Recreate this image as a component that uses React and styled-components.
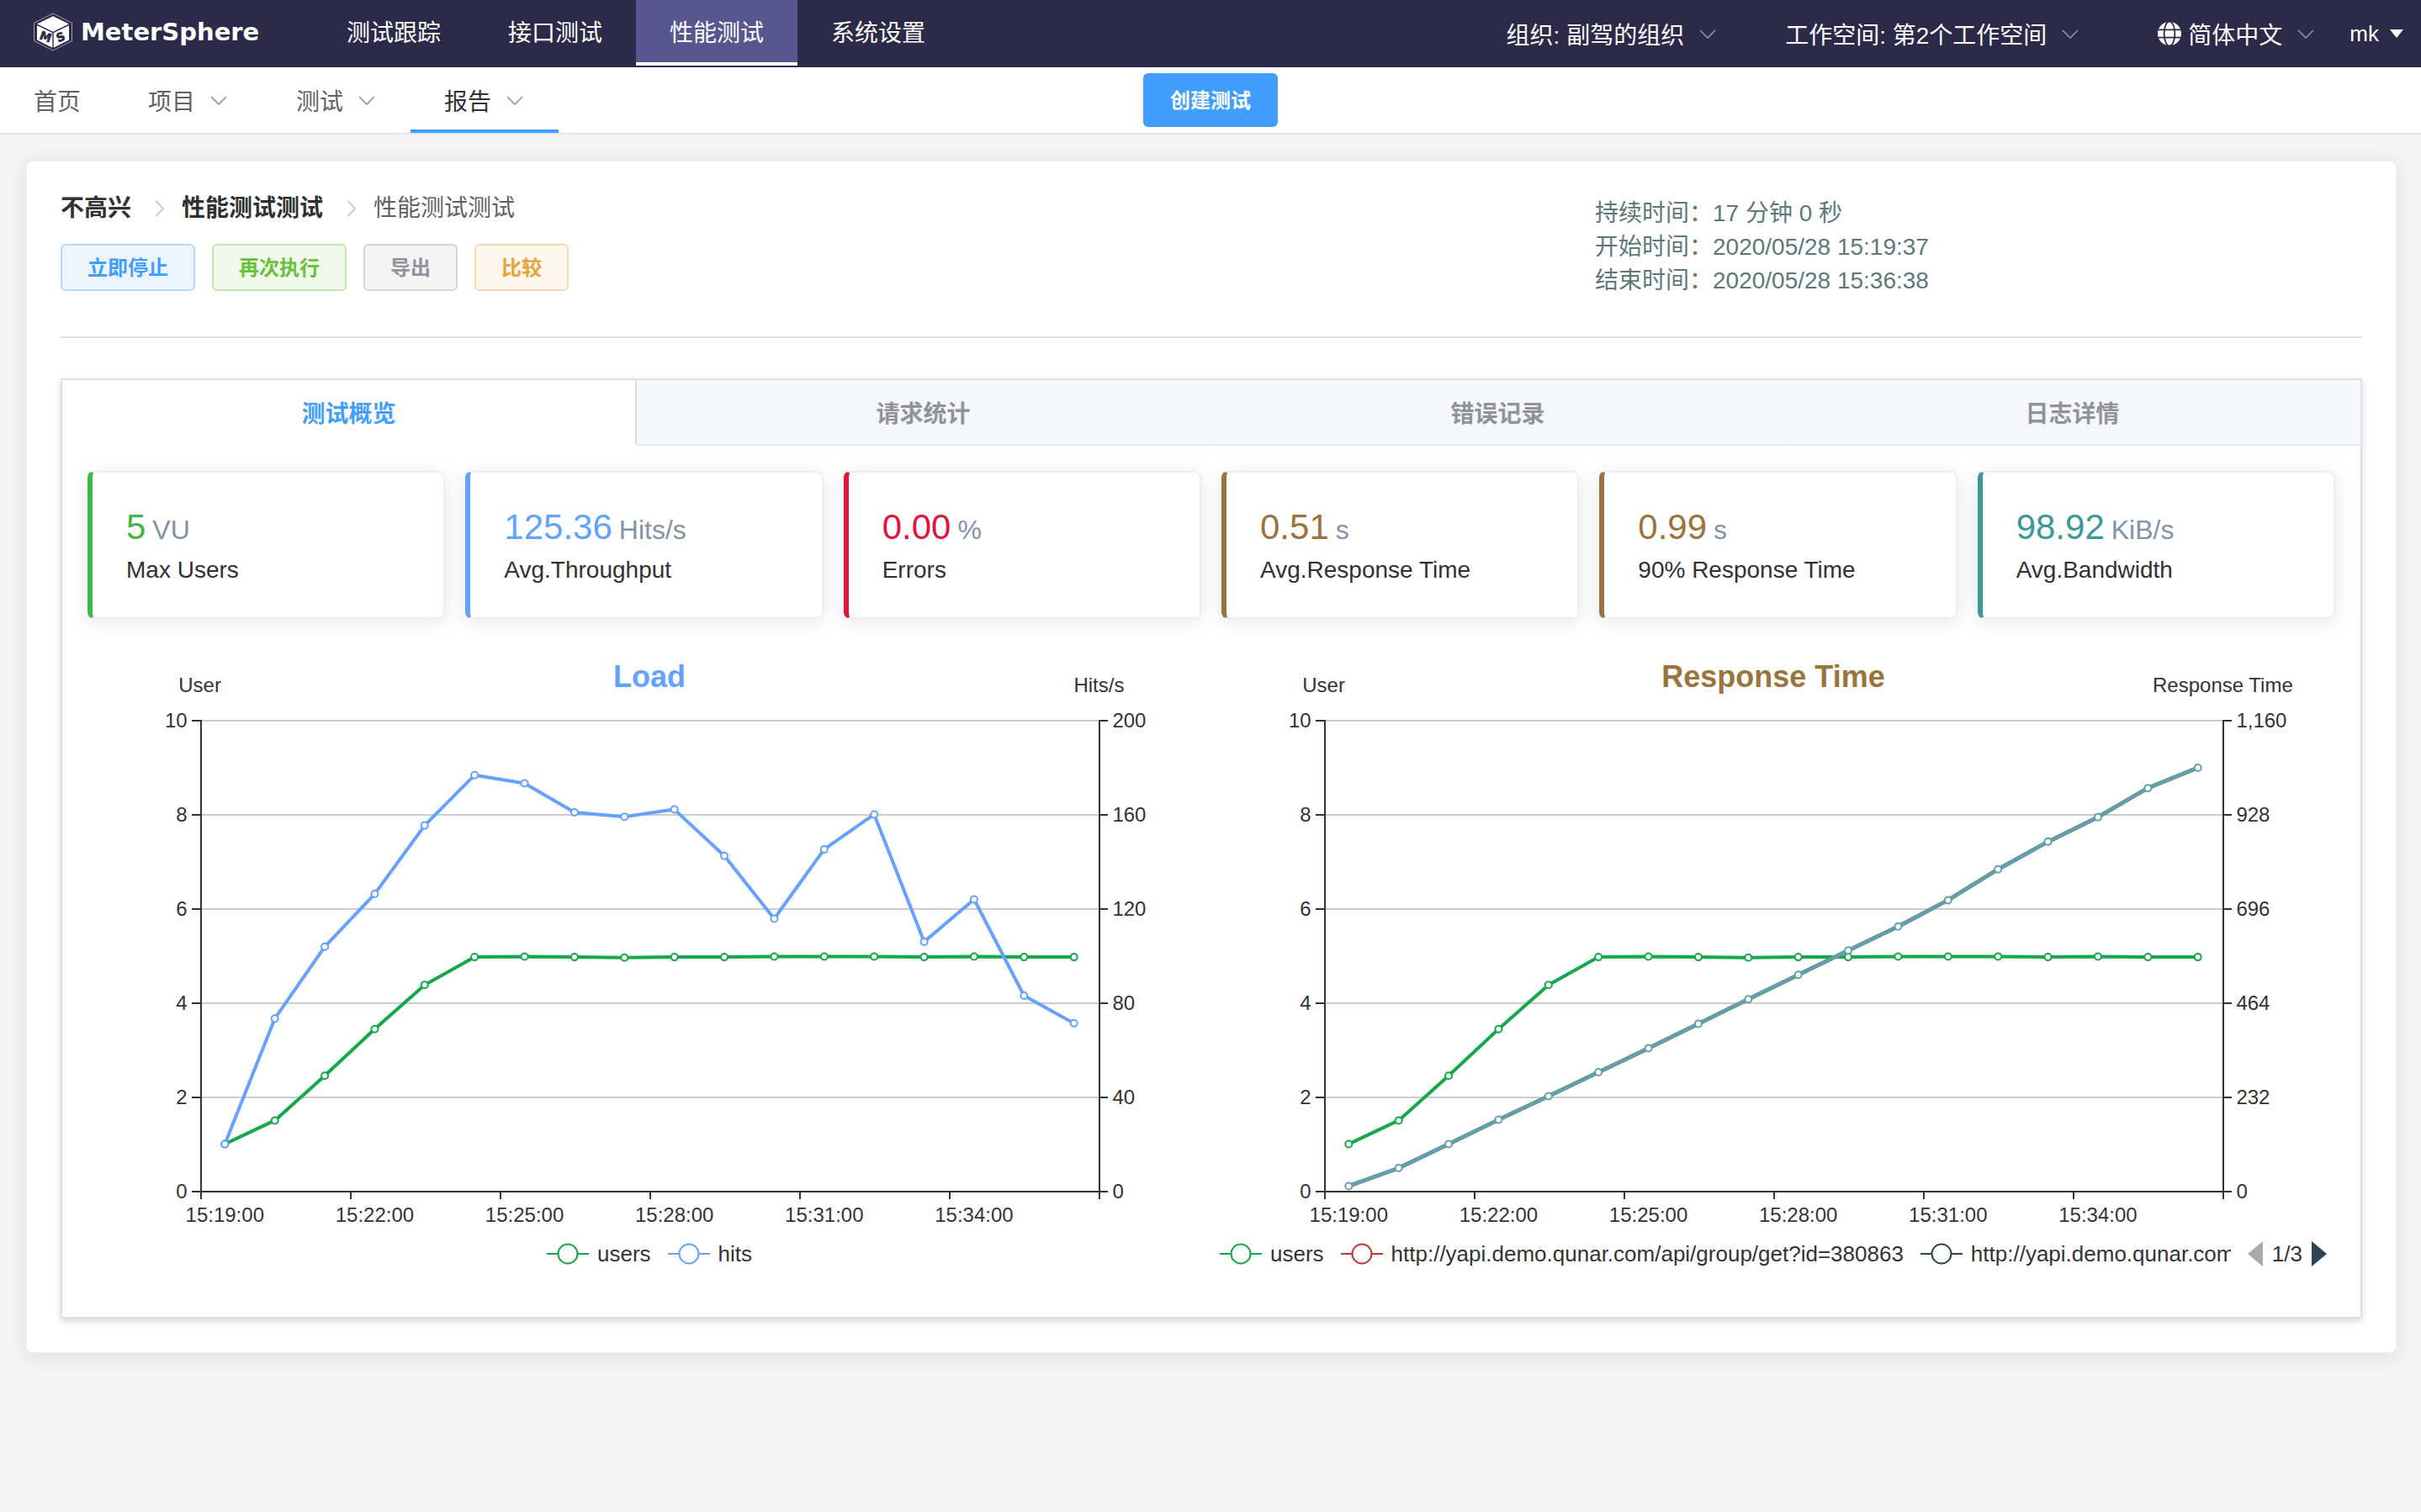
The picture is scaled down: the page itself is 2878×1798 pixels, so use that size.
import React from "react";
import styled, { createGlobalStyle } from "styled-components";

const GlobalStyle = createGlobalStyle`
  *, *::before, *::after { box-sizing: border-box; }
  body {
    margin: 0;
    background: #f5f5f5;
    color: #303133;
    font-family: "Liberation Sans", "Noto Sans CJK SC", sans-serif;
    font-size: 28px;
  }
  button { font-family: inherit; cursor: pointer; }
  a { color: inherit; text-decoration: none; }
`;

/* ---------- top bar ---------- */

const TopBar = styled.header`
  display: flex;
  height: 80px;
  padding-right: 20px;
  background: #2c2a48;
  color: #fff;
`;

const Brand = styled.a`
  display: flex;
  align-items: center;
  gap: 10px;
  flex: none;
  width: 372px;
  padding: 0 0 4px 40px;
`;

const BrandName = styled.span`
  font-family: "DejaVu Sans", sans-serif;
  font-weight: 700;
  font-size: 29px;
  line-height: 40px;
`;

const MainNav = styled.nav`
  display: flex;
  height: 78px;
`;

const MainLink = styled.a`
  display: flex;
  align-items: center;
  padding: 0 40px;
  white-space: nowrap;
  border-bottom: 4px solid ${(p) => (p.$active ? "#fff" : "transparent")};
  background: ${(p) => (p.$active ? "#595591" : "transparent")};
  background-clip: padding-box;
`;

const TopMenus = styled.div`
  display: flex;
  margin-left: auto;
`;

const MenuButton = styled.button`
  display: flex;
  align-items: center;
  gap: ${(p) => (p.$small ? 12 : 16)}px;
  padding: ${(p) => p.$pad || "0 40px"};
  border: 0;
  background: none;
  color: #fff;
  font-size: ${(p) => (p.$small ? 26 : 28)}px;
  white-space: nowrap;
`;

const Language = styled.span`
  display: flex;
  align-items: center;
  gap: 8px;
`;

/* ---------- second bar ---------- */

const SubBar = styled.div`
  display: grid;
  grid-template-columns: 1fr auto 1fr;
  align-items: center;
  height: 80px;
  background: #fff;
  border-bottom: 2px solid #e6e6e6;
`;

const SubNav = styled.nav`
  display: flex;
  height: 78px;
`;

const SubLink = styled.a`
  display: flex;
  align-items: center;
  gap: 16px;
  padding: 4px 40px 0;
  border-bottom: 4px solid ${(p) => (p.$active ? "#409eff" : "transparent")};
  color: ${(p) => (p.$active ? "#303133" : "#606266")};
  white-space: nowrap;
`;

const CreateButton = styled.button`
  height: 64px;
  padding: 0 32px 4px;
  border: 0;
  border-radius: 6px;
  background: #409eff;
  color: #fff;
  font-size: 24px;
  font-weight: 700;
`;

/* ---------- report card ---------- */

const Card = styled.main`
  margin: 30px 28px 30px 30px;
  padding: 40px;
  background: #fff;
  border: 2px solid #ebeef5;
  border-radius: 8px;
  box-shadow: 0 4px 24px rgba(0, 0, 0, 0.1);
`;

const ReportHead = styled.section`
  display: grid;
  grid-template-columns: 2fr 1fr;
  padding-bottom: 46px;
  margin-bottom: 48px;
  border-bottom: 2px solid #dcdfe6;
`;

const Crumbs = styled.nav`
  display: flex;
  align-items: center;
  margin-bottom: 26px;
  line-height: 32px;
  color: #606266;
`;

const CrumbLink = styled.a`
  display: flex;
  align-items: center;
  font-weight: 700;
  color: #303133;
`;

const CrumbArrow = styled.svg`
  width: 12px;
  height: 20px;
  margin: 0 20px 0 28px;
`;

const Actions = styled.div`
  display: flex;
  gap: 20px;
`;

const tones = {
  primary: ["#409eff", "#ecf5ff", "#b3d8ff"],
  success: ["#67c23a", "#f0f9eb", "#c2e7b0"],
  info: ["#909399", "#f4f4f5", "#d3d4d6"],
  warning: ["#e6a23c", "#fdf6ec", "#f5dab1"],
};

const ActionButton = styled.button`
  height: 56px;
  padding: 0 30px 4px;
  border: 2px solid ${(p) => tones[p.$tone][2]};
  border-radius: 6px;
  background: ${(p) => tones[p.$tone][1]};
  color: ${(p) => tones[p.$tone][0]};
  font-size: 24px;
  font-weight: 700;
`;

const Times = styled.div`
  padding-top: 2px;
  line-height: 40px;
  color: #5c7878;
`;

/* ---------- tab panel ---------- */

const Panel = styled.section`
  border: 2px solid #dcdfe6;
  background: #fff;
  box-shadow: 0 4px 8px rgba(0, 0, 0, 0.12), 0 0 12px rgba(0, 0, 0, 0.04);
`;

const TabList = styled.div`
  display: grid;
  grid-template-columns: repeat(4, 1fr);
`;

const Tab = styled.button`
  height: 78px;
  padding: 0;
  border: 0;
  border-right: 2px solid ${(p) => (p.$active ? "#dcdfe6" : "transparent")};
  border-bottom: 2px solid ${(p) => (p.$active ? "#fff" : "#e4e7ed")};
  background: ${(p) => (p.$active ? "#fff" : "#f5f7fa")};
  color: ${(p) => (p.$active ? "#409eff" : "#909399")};
  font-size: 28px;
  font-weight: 700;
`;

const PanelBody = styled.div`
  padding: 30px;
`;

const Stats = styled.div`
  display: grid;
  grid-template-columns: repeat(6, 1fr);
  gap: 24px;
  margin-bottom: 18px;
`;

const StatCard = styled.article`
  padding: 40px 40px 36px;
  border: 2px solid #ebeef5;
  border-left: 6px solid ${(p) => p.$color};
  border-radius: 8px;
  box-shadow: 0 4px 24px rgba(0, 0, 0, 0.1);
`;

const StatValue = styled.div`
  display: flex;
  align-items: baseline;
  gap: 8px;
  height: 50px;
  margin-bottom: 6px;
  line-height: 50px;
  font-size: 42px;
  color: ${(p) => p.$color};
`;

const StatUnit = styled.span`
  font-size: 32px;
  color: #8492a6;
`;

const StatLabel = styled.div`
  line-height: 40px;
`;

const Charts = styled.div`
  display: grid;
  grid-template-columns: repeat(2, minmax(0, 1fr));
  padding-bottom: 20px;
`;

const Plot = styled.svg`
  display: block;
  width: 100%;
  height: auto;
  font-size: 24px;
`;

const ChartTitle = styled.text`
  font-size: 36px;
  font-weight: 700;
`;

const Legend = styled.div`
  display: flex;
  align-items: center;
  justify-content: center;
  height: 50px;
  padding: 0 10px;
  color: #333;
  font-size: 26px;
`;

const LegendItems = styled.div`
  display: flex;
  gap: 20px;
  min-width: 0;
  overflow: hidden;
`;

const LegendItem = styled.button`
  display: flex;
  align-items: center;
  gap: 10px;
  flex: none;
  height: 40px;
  padding: 0;
  border: 0;
  background: none;
  color: inherit;
  font-size: 26px;
`;

const Pager = styled.div`
  display: flex;
  align-items: center;
  flex: none;
  gap: 11px;
  padding-left: 20px;
`;

const PagerButton = styled.button`
  display: flex;
  padding: 0;
  border: 0;
  background: none;
`;

/* ---------- icons ---------- */

const Chevron = ({ color = "#909399" }) => (
  <svg width="24" height="24" viewBox="0 0 24 24" aria-hidden="true">
    <path d="M3 8l9 9 9-9" fill="none" stroke={color} strokeWidth="1.6" />
  </svg>
);

const Globe = () => (
  <svg width="28" height="28" viewBox="0 0 28 28" aria-hidden="true">
    <circle cx="14" cy="14" r="14" fill="#fff" />
    <g fill="none" stroke="#2c2a48" strokeWidth="1.8">
      <ellipse cx="14" cy="14" rx="6.4" ry="14.5" />
      <path d="M0 9.4h28M0 18.6h28" />
    </g>
  </svg>
);

const Logo = () => (
  <svg width="46" height="46" viewBox="0 0 46 46" aria-hidden="true">
    <path d="M23 1L45.500 12.300V33.700L23 45 0.500 33.700V12.300z" fill="none" stroke="#a3a2b3" strokeWidth="1" />
    <path d="M23 4.300L42 13.600 23 22.800 4 13.600z" fill="#fff" />
    <path d="M4 15.200L22.300 24V41.800L4 32.600z" fill="#fff" />
    <path d="M42 15.200L23.700 24V41.800L42 32.600z" fill="#fff" />
    <g fill="#2c2a48" stroke="#2c2a48" strokeWidth=".6" fontFamily="DejaVu Sans" fontWeight="700" fontSize="14" textAnchor="middle">
      <text transform="translate(12.500 33.500) rotate(20)">M</text>
      <text transform="translate(34 33.500) rotate(-22)">S</text>
    </g>
  </svg>
);

/* ---------- charts ---------- */

const USERS = [1.01, 1.51, 2.46, 3.45, 4.39, 4.98, 4.99, 4.98, 4.97, 4.98, 4.98, 4.99, 4.99, 4.99, 4.98, 4.99, 4.98, 4.98];
const HITS = [20.2, 73.5, 104, 126.4, 155.5, 176.9, 173.4, 161.1, 159.2, 162.3, 142.6, 115.9, 145.4, 160.2, 106.1, 124.1, 83.2, 71.5];
const RESPONSE = [13.6, 58, 117, 177, 235, 294, 353, 413.5, 474, 534, 594, 653, 718, 794, 862, 922.5, 994, 1044];
const TIMES = ["15:19:00", "15:22:00", "15:25:00", "15:28:00", "15:31:00", "15:34:00"];

const GREEN = "#12a84b";
const BLUE = "#65a2ff";

const LEFT = 133.6;
const WIDTH = 1068.8;
const RIGHT = LEFT + WIDTH;
const TOP = 102;
const BOTTOM = 662;
const BAND = WIDTH / 18;
const crisp = (v) => Math.round(v) + 1;

function Series({ values, max, color, under }) {
  const pts = values.map((v, i) => [LEFT + BAND * (i + 0.5), BOTTOM + 1 - (v / max) * (BOTTOM - TOP)]);
  const points = pts.map((p) => p.map((n) => n.toFixed(1)).join(",")).join(" ");
  return (
    <g>
      {under && <polyline points={points} fill="none" stroke={under} strokeWidth="5" strokeLinejoin="bevel" />}
      <polyline points={points} fill="none" stroke={color} strokeWidth="4" strokeLinejoin="bevel" />
      {pts.map(([x, y], i) => (
        <circle key={i} cx={x} cy={y} r="4" fill="#fff" stroke={color} strokeWidth="2" />
      ))}
    </g>
  );
}

function Chart({ title, titleColor, rightName, rightLabels, children }) {
  const axisL = crisp(LEFT);
  const axisR = crisp(RIGHT);
  const rows = [0, 1, 2, 3, 4, 5].map((i) => crisp(BOTTOM - (i * (BOTTOM - TOP)) / 5));
  return (
    <Plot viewBox="0 0 1336 712" role="img" aria-label={title}>
      <g stroke="#ccc" strokeWidth="2">
        {rows.slice(1).map((y) => <line key={y} x1={axisL} x2={axisR} y1={y} y2={y} />)}
      </g>
      <g stroke="#333" strokeWidth="2">
        <line x1={axisL} x2={axisL} y1={TOP} y2={BOTTOM + 2} />
        <line x1={axisR} x2={axisR} y1={TOP} y2={BOTTOM + 2} />
        <line x1={axisL} x2={axisR} y1={rows[0]} y2={rows[0]} />
        {rows.map((y) => (
          <React.Fragment key={y}>
            <line x1={axisL - 11} x2={axisL} y1={y} y2={y} />
            <line x1={axisR} x2={axisR + 10} y1={y} y2={y} />
          </React.Fragment>
        ))}
        {[0, 3, 6, 9, 12, 15, 18].map((i) => {
          const x = crisp(LEFT + BAND * i);
          return <line key={i} x1={x} x2={x} y1={BOTTOM} y2={BOTTOM + 10} />;
        })}
      </g>
      <ChartTitle x="668" y="63" textAnchor="middle" fill={titleColor}>{title}</ChartTitle>
      <g fill="#333">
        <text x={LEFT} y="69" textAnchor="middle">User</text>
        <text x={RIGHT} y="69" textAnchor="middle">{rightName}</text>
        {rows.map((y, i) => (
          <React.Fragment key={y}>
            <text x={LEFT - 15} y={y + 8} textAnchor="end">{i * 2}</text>
            <text x={RIGHT + 16} y={y + 8}>{rightLabels[i]}</text>
          </React.Fragment>
        ))}
        {TIMES.map((t, i) => (
          <text key={t} x={LEFT + BAND * (i * 3 + 0.5)} y="699" textAnchor="middle">{t}</text>
        ))}
      </g>
      {children}
    </Plot>
  );
}

const LegendEntry = ({ color, children }) => (
  <LegendItem type="button">
    <svg width="50" height="28" viewBox="0 0 50 28" aria-hidden="true">
      <path d="M0 14h50" stroke={color} strokeWidth="2" />
      <circle cx="25" cy="14" r="11.500" fill="#fff" stroke={color} strokeWidth="2" />
    </svg>
    {children}
  </LegendItem>
);

const STATS = [
  ["5", "VU", "Max Users", "#44b549"],
  ["125.36", "Hits/s", "Avg.Throughput", "#65a2ff"],
  ["0.00", "%", "Errors", "#e6113c"],
  ["0.51", "s", "Avg.Response Time", "#99743c"],
  ["0.99", "s", "90% Response Time", "#99743c"],
  ["98.92", "KiB/s", "Avg.Bandwidth", "#3c9899"],
];

export default function App() {
  return (
    <>
      <GlobalStyle />
      <TopBar>
        <Brand href="#"><Logo /><BrandName>MeterSphere</BrandName></Brand>
        <MainNav>
          <MainLink href="#">测试跟踪</MainLink>
          <MainLink href="#">接口测试</MainLink>
          <MainLink href="#" $active aria-current="page">性能测试</MainLink>
          <MainLink href="#">系统设置</MainLink>
        </MainNav>
        <TopMenus>
          <MenuButton type="button" aria-haspopup="menu">组织: 副驾的组织<Chevron /></MenuButton>
          <MenuButton type="button" aria-haspopup="menu">工作空间: 第2个工作空间<Chevron /></MenuButton>
          <MenuButton type="button" aria-haspopup="menu" $pad="0 40px 0 52px">
            <Language><Globe />简体中文</Language><Chevron />
          </MenuButton>
          <MenuButton type="button" aria-haspopup="menu" $pad="0" $small>
            mk
            <svg width="18" height="10" viewBox="0 0 18 10" aria-hidden="true"><path d="M1 0h16L9 10z" fill="#fff" /></svg>
          </MenuButton>
        </TopMenus>
      </TopBar>
      <SubBar>
        <SubNav>
          <SubLink href="#">首页</SubLink>
          <SubLink href="#">项目<Chevron /></SubLink>
          <SubLink href="#">测试<Chevron /></SubLink>
          <SubLink href="#" $active aria-current="page">报告<Chevron /></SubLink>
        </SubNav>
        <CreateButton type="button">创建测试</CreateButton>
      </SubBar>
      <Card>
        <ReportHead>
          <div>
            <Crumbs aria-label="breadcrumb">
              {["不高兴", "性能测试测试"].map((name) => (
                <React.Fragment key={name}>
                  <CrumbLink href="#">{name}</CrumbLink>
                  <CrumbArrow viewBox="0 0 12 20" aria-hidden="true">
                    <path d="M1.500 1l8.500 9-8.500 9" fill="none" stroke="#c0c4cc" strokeWidth="1.800" />
                  </CrumbArrow>
                </React.Fragment>
              ))}
              <span>性能测试测试</span>
            </Crumbs>
            <Actions>
              <ActionButton type="button" $tone="primary">立即停止</ActionButton>
              <ActionButton type="button" $tone="success">再次执行</ActionButton>
              <ActionButton type="button" $tone="info">导出</ActionButton>
              <ActionButton type="button" $tone="warning">比较</ActionButton>
            </Actions>
          </div>
          <Times>
            <div>持续时间：17 分钟 0 秒</div>
            <div>开始时间：2020/05/28 15:19:37</div>
            <div>结束时间：2020/05/28 15:36:38</div>
          </Times>
        </ReportHead>
        <Panel>
          <TabList role="tablist">
            {["测试概览", "请求统计", "错误记录", "日志详情"].map((name, i) => (
              <Tab key={name} type="button" role="tab" aria-selected={i === 0} $active={i === 0}>{name}</Tab>
            ))}
          </TabList>
          <PanelBody>
            <Stats>
              {STATS.map(([value, unit, label, color]) => (
                <StatCard key={label} $color={color}>
                  <StatValue $color={color}>{value}<StatUnit>{unit}</StatUnit></StatValue>
                  <StatLabel>{label}</StatLabel>
                </StatCard>
              ))}
            </Stats>
            <Charts>
              <div>
                <Chart title="Load" titleColor={BLUE} rightName="Hits/s" rightLabels={["0", "40", "80", "120", "160", "200"]}>
                  <Series values={USERS} max={10} color={GREEN} />
                  <Series values={HITS} max={200} color={BLUE} />
                </Chart>
                <Legend>
                  <LegendItems>
                    <LegendEntry color={GREEN}>users</LegendEntry>
                    <LegendEntry color={BLUE}>hits</LegendEntry>
                  </LegendItems>
                </Legend>
              </div>
              <div>
                <Chart title="Response Time" titleColor="#99743c" rightName="Response Time" rightLabels={["0", "232", "464", "696", "928", "1,160"]}>
                  <Series values={USERS} max={10} color={GREEN} />
                  <Series values={RESPONSE} max={1160} color="#61a0a8" under="#6f858f" />
                </Chart>
                <Legend>
                  <LegendItems>
                    <LegendEntry color={GREEN}>users</LegendEntry>
                    <LegendEntry color="#c23531">http://yapi.demo.qunar.com/api/group/get?id=380863</LegendEntry>
                    <LegendEntry color="#2f4554">http://yapi.demo.qunar.com</LegendEntry>
                  </LegendItems>
                  <Pager>
                    <PagerButton type="button" aria-label="previous">
                      <svg width="18" height="30" viewBox="0 0 18 30"><path d="M18 0v30L0 15z" fill="#aaa" /></svg>
                    </PagerButton>
                    <span>1/3</span>
                    <PagerButton type="button" aria-label="next">
                      <svg width="18" height="30" viewBox="0 0 18 30"><path d="M0 0v30l18-15z" fill="#2f4554" /></svg>
                    </PagerButton>
                  </Pager>
                </Legend>
              </div>
            </Charts>
          </PanelBody>
        </Panel>
      </Card>
    </>
  );
}
